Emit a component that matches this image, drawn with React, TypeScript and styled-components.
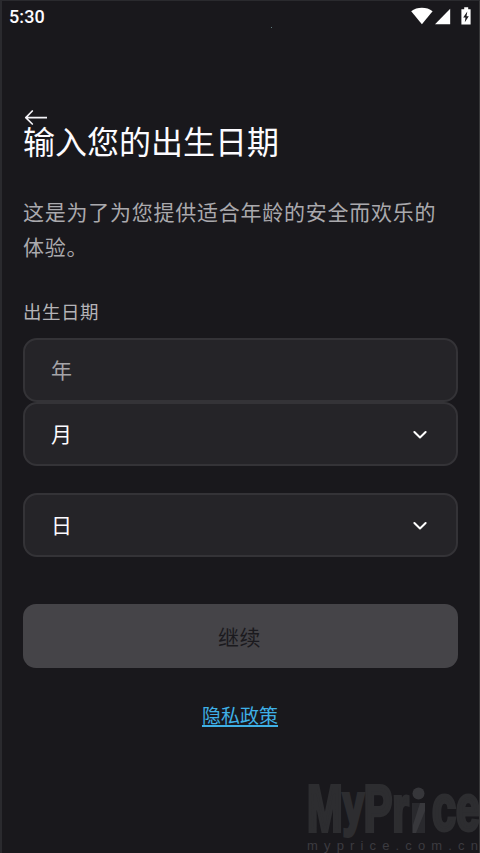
import React from "react";
import styled, { createGlobalStyle } from "styled-components";

const GlobalStyle = createGlobalStyle`
  *, *::before, *::after { box-sizing: border-box; }
  html, body { margin: 0; background: #19181c; overflow: hidden; }
  button, input { font: inherit; margin: 0; }
`;

const Screen = styled.div`
  position: relative;
  width: 480px;
  height: 853px;
  overflow: hidden;
  display: flex;
  flex-direction: column;
  background: #19181c;
  color: #fcfbff;
  border-left: 2px solid #2a2a2e;
  border-top: 1px solid #2a2a2e;
  border-right: 1px solid #38383a;
  font-family: "Noto Sans CJK SC", sans-serif;
`;

const StatusBar = styled.header`
  display: flex;
  justify-content: space-between;
  height: 32px;
  padding: 5px 6px 0 7px;
`;

const Clock = styled.time`
  font: 500 18px/22px Roboto, sans-serif;
  letter-spacing: 0.1px;
`;

const StatusIcons = styled.svg`
  display: block;
  width: 62px;
  height: 20px;
`;

const Speck = styled.span`
  position: absolute;
  left: 269px;
  top: 26px;
  width: 1px;
  height: 1px;
  background: #5d7a7c;
`;

const Content = styled.main`
  display: flex;
  flex-direction: column;
  width: 435px;
  margin-left: 21px;
  padding-top: 75px;
`;

const BackButton = styled.button`
  width: 24px;
  height: 18px;
  padding: 0;
  border: 0;
  background: none;
  color: #f4f3f7;
  svg { display: block; }
`;

const Title = styled.h1`
  margin: -10px 0 0;
  height: 48px;
  font-size: 32px;
  line-height: 48px;
  font-weight: 400;
  white-space: nowrap;
`;

const Description = styled.p`
  margin: 30px 0 0;
  padding-right: 16px;
  font-size: 21px;
  letter-spacing: 0.75px;
  line-height: 35px;
  color: #aaa9ad;
`;

const FieldLabel = styled.label`
  margin-top: 33px;
  height: 28px;
  font-size: 18.5px;
  letter-spacing: 0.5px;
  line-height: 28px;
  color: #b4b3b7;
`;

const Field = styled.div<{ $gap: number }>`
  display: flex;
  align-items: center;
  justify-content: space-between;
  height: 64px;
  margin-top: ${(p) => p.$gap}px;
  padding: 0 29px 2px 26px;
  border: 2px solid #343337;
  border-radius: 14px;
  background: #252428;
  font-size: 21px;
  line-height: 32px;
`;

const YearInput = styled.input`
  width: 100%;
  height: 32px;
  padding: 0;
  border: 0;
  outline: 0;
  background: none;
  color: #fff;
  &::placeholder { color: #a5a4a8; opacity: 1; }
`;

const SubmitButton = styled.button`
  height: 64px;
  margin-top: 47px;
  padding: 0 2px 1px 0;
  border: 0;
  border-radius: 13px;
  background: #454448;
  color: #1b1a1e;
  font-size: 21px;
  letter-spacing: 0.5px;
  line-height: 32px;
`;

const PrivacyLink = styled.a`
  align-self: center;
  margin-top: 33px;
  margin-right: 1px;
  font-size: 19px;
  line-height: 28px;
  color: #3fb0e6;
  text-decoration: underline;
  text-decoration-thickness: 1.5px;
  text-underline-offset: 2px;
`;

const ChevronIcon = styled.svg`
  display: block;
  margin-top: 4px;
`;

const Watermark = styled.svg`
  position: absolute;
  left: 298px;
  top: 774px;
  pointer-events: none;
`;

const Chevron = () => (
  <ChevronIcon width="14" height="10" viewBox="0 0 14 10" fill="none" stroke="#fff" strokeWidth="2" strokeLinecap="round" strokeLinejoin="round">
    <path d="M1.4 2 7 7.5 12.6 2" />
  </ChevronIcon>
);

export default function App() {
  return (
    <>
      <GlobalStyle />
      <Screen>
        <StatusBar>
          <Clock>5:30</Clock>
          <StatusIcons viewBox="0 0 62 20" fill="#fff">
            <path d="M0.2 5.2C6 0.7 15.8 0.7 21.6 5.2L10.9 18.2Z" />
            <path d="M39.2 2.8V18.2H24Z" />
            <path d="M53.2 1.2h4v2h2.4v15.2h-9.2V3.2h2.8Z" />
            <path d="M56.3 5.6 52.2 11.5h2.3l-.7 4.8 4-6.1h-2.3Z" fill="#19181c" />
          </StatusIcons>
        </StatusBar>
        <Speck />
        <Content>
          <BackButton aria-label="返回">
            <svg width="24" height="18" viewBox="0 0 24 18" fill="none" stroke="currentColor" strokeWidth="1.7" strokeLinecap="round" strokeLinejoin="round">
              <path d="M24 9.7H3M9.3 3 2.8 9.7 9.3 16" />
            </svg>
          </BackButton>
          <Title>输入您的出生日期</Title>
          <Description>这是为了为您提供适合年龄的安全而欢乐的体验。</Description>
          <FieldLabel htmlFor="year">出生日期</FieldLabel>
          <Field $gap={13}>
            <YearInput id="year" placeholder="年" />
          </Field>
          <Field $gap={0}>
            <span>月</span>
            <Chevron />
          </Field>
          <Field $gap={27}>
            <span>日</span>
            <Chevron />
          </Field>
          <SubmitButton disabled>继续</SubmitButton>
          <PrivacyLink>隐私政策</PrivacyLink>
        </Content>
        <Watermark width="179" height="78" viewBox="300 775 179 78">
          <g fill="#2d2d30" stroke="#2d2d30" strokeWidth="4" fontFamily="Liberation Sans, sans-serif" fontWeight="700" fontSize="64">
            <text x="307" y="831" textLength="102" lengthAdjust="spacingAndGlyphs">
              M<tspan fontSize="57" dy="-7">y</tspan><tspan dy="7">Pr</tspan>
            </text>
            <text x="432" y="830" textLength="48" lengthAdjust="spacingAndGlyphs">ce</text>
          </g>
          <circle cx="418.5" cy="793.5" r="6" fill="#36363a" />
          <path d="M412 803h13v30h-13Z" fill="#29292d" />
          <path d="M420 803h5v8l-9 22h-3v-8Z" fill="#38383c" />
          <text x="307" y="850" fill="#3c3b40" fontFamily="Liberation Sans, sans-serif" fontSize="13" textLength="171" lengthAdjust="spacing">myprice.com.cn</text>
        </Watermark>
      </Screen>
    </>
  );
}
